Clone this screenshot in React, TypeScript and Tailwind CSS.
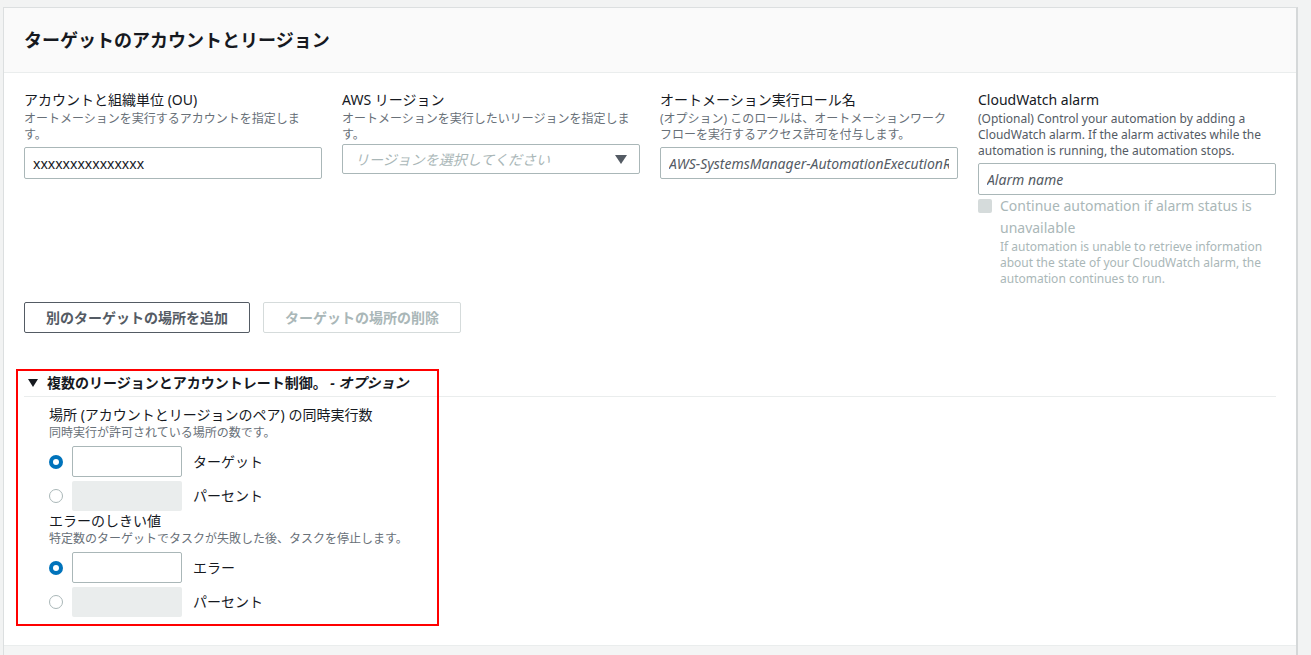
import React from 'react';

const font = { fontFamily: '"Noto Sans", "Noto Sans CJK JP", sans-serif' };

interface FieldProps {
  label: string;
  description: string;
  children: React.ReactNode;
}

const Field: React.FC<FieldProps> = ({ label, description, children }) => (
  <div className="flex flex-col">
    <label className="text-[14px] leading-[22px] text-[#16191f]">{label}</label>
    <p className="text-[12px] leading-[16px] text-[#687078]">{description}</p>
    {children}
  </div>
);

const Radio: React.FC<{ checked?: boolean }> = ({ checked }) =>
  checked ? (
    <span className="flex h-[14px] w-[14px] shrink-0 items-center justify-center rounded-full bg-[#0073bb]">
      <span className="h-[6px] w-[6px] rounded-full bg-white" />
    </span>
  ) : (
    <span className="h-[14px] w-[14px] shrink-0 rounded-full border border-[#aab7b8] bg-white" />
  );

const RateRow: React.FC<{ checked?: boolean; label: string }> = ({ checked, label }) => (
  <div className="flex items-center">
    <Radio checked={checked} />
    <input
      readOnly
      disabled={!checked}
      className={
        checked
          ? 'ml-[9px] h-[31px] w-[110px] rounded-[2px] border border-[#aab7b8] bg-white outline-none'
          : 'ml-[9px] h-[30px] w-[110px] rounded-[2px] bg-[#eaeded] outline-none'
      }
    />
    <span className="ml-[11px] text-[14px] leading-[20px] text-[#16191f]">{label}</span>
  </div>
);

const App: React.FC = () => {
  return (
    <div className="h-[655px] w-full overflow-hidden bg-[#f2f3f3] pl-[3px] pt-[7px]" style={font}>
      <div className="relative flex h-[660px] w-[1295px] flex-col border-l border-r-2 border-t border-[#dcdfe0] border-r-[#d5d8d9] bg-white">
        {/* header */}
        <div className="flex h-[65px] items-center border-b border-[#eaeded] bg-[#fafafa] pl-[20px]">
          <h2 className="text-[18px] font-bold leading-[24px] text-[#16191f]">ターゲットのアカウントとリージョン</h2>
        </div>

        {/* body */}
        <div className="px-[20px] pt-[16px]">
          <div className="grid grid-cols-4 gap-x-[20px]">
            <Field label="アカウントと組織単位 (OU)" description="オートメーションを実行するアカウントを指定します。">
              <input
                readOnly
                value="xxxxxxxxxxxxxxx"
                className="mt-[4px] h-[32px] rounded-[2px] border border-[#aab7b8] px-[8px] text-[14px] text-[#16191f] outline-none"
              />
            </Field>
            <Field label="AWS リージョン" description="オートメーションを実行したいリージョンを指定します。">
              <div className="mt-[1px] flex h-[30px] items-center justify-between rounded-[2px] border border-[#aab7b8] pl-[12px] pr-[12px]">
                <span className="text-[14px] italic text-[#aab7b8]">リージョンを選択してください</span>
                <svg width="12" height="9" viewBox="0 0 12 9">
                  <path d="M0 0h12L6 9z" fill="#545b64" />
                </svg>
              </div>
            </Field>
            <Field label="オートメーション実行ロール名" description="(オプション) このロールは、オートメーションワークフローを実行するアクセス許可を付与します。">
              <input
                readOnly
                value="AWS-SystemsManager-AutomationExecutionRole"
                className="mt-[4px] h-[32px] min-w-0 rounded-[2px] border border-[#aab7b8] px-[8px] text-[14px] italic text-[#545b64] outline-none"
              />
            </Field>
            <div className="flex flex-col">
              <label className="text-[14px] leading-[22px] text-[#16191f]">CloudWatch alarm</label>
              <p className="text-[12px] leading-[16px] text-[#545b64]">
                (Optional) Control your automation by adding a CloudWatch alarm. If the alarm activates while the automation is running, the automation stops.
              </p>
              <input
                readOnly
                placeholder="Alarm name"
                className="mt-[4px] h-[32px] rounded-[2px] border border-[#aab7b8] px-[8px] text-[14px] italic text-[#545b64] outline-none placeholder:text-[#545b64]"
              />
              <div className="flex">
                <span className="mt-[4px] h-[14px] w-[14px] shrink-0 rounded-[2px] bg-[#d5dbdb]" />
                <div className="ml-[8px] flex flex-col">
                  <span className="text-[14px] leading-[22px] text-[#aab7b8]">Continue automation if alarm status is unavailable</span>
                  <span className="text-[12px] leading-[16px] text-[#aab7b8]">
                    If automation is unable to retrieve information about the state of your CloudWatch alarm, the automation continues to run.
                  </span>
                </div>
              </div>
            </div>
          </div>

          {/* buttons */}
          <div className="mt-[15px] flex gap-[13px]">
            <button className="h-[31px] rounded-[2px] border border-[#545b64] px-[21px] text-[14px] font-bold text-[#545b64]">
              別のターゲットの場所を追加
            </button>
            <button className="h-[31px] rounded-[2px] border border-[#d5dbdb] px-[21px] text-[14px] font-bold text-[#aab7b8]">
              ターゲットの場所の削除
            </button>
          </div>

          {/* expandable section */}
          <div className="mt-[36px]">
            <div className="flex h-[28px] items-center border-b border-[#eaeded] pl-[4px]">
              <svg width="10" height="8" viewBox="0 0 10 8">
                <path d="M0 0h10L5 8z" fill="#16191f" />
              </svg>
              <span className="ml-[9px] text-[14px] font-bold text-[#16191f]">
                複数のリージョンとアカウントレート制御。 <span className="italic">- オプション</span>
              </span>
            </div>
            <div className="pl-[25px] pt-[8px]">
              <p className="text-[14px] leading-[20px] text-[#16191f]">場所 (アカウントとリージョンのペア) の同時実行数</p>
              <p className="text-[12px] leading-[16px] text-[#687078]">同時実行が許可されている場所の数です。</p>
              <div className="mt-[5px] flex flex-col gap-[4px]">
                <RateRow checked label="ターゲット" />
                <RateRow label="パーセント" />
              </div>
              <p className="text-[14px] leading-[20px] text-[#16191f]">エラーのしきい値</p>
              <p className="text-[12px] leading-[16px] text-[#687078]">特定数のターゲットでタスクが失敗した後、タスクを停止します。</p>
              <div className="mt-[5px] flex flex-col gap-[4px]">
                <RateRow checked label="エラー" />
                <RateRow label="パーセント" />
              </div>
            </div>
          </div>
        </div>

        {/* footer strip */}
        <div className="absolute left-0 right-0 top-[637px] h-[30px] border-t border-[#eaeded] bg-[#f4f5f5]" />

        {/* annotation highlight */}
        <div className="pointer-events-none absolute left-[12px] top-[361px] h-[257px] w-[423px] border-2 border-[#ff0000]" />
      </div>
    </div>
  );
};

export default App;
